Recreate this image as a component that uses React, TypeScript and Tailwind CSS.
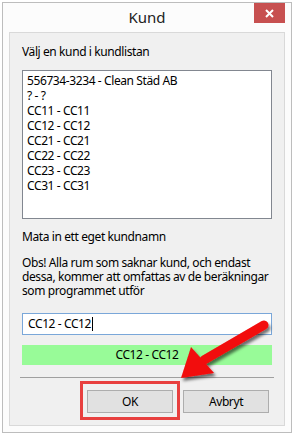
import React from 'react'

const customers = [
  '556734-3234 - Clean Städ AB',
  '? - ?',
  'CC11 - CC11',
  'CC12 - CC12',
  'CC21 - CC21',
  'CC22 - CC22',
  'CC23 - CC23',
  'CC31 - CC31',
]

function Arrow() {
  return (
    <svg
      className="pointer-events-none absolute left-0 top-0"
      width={294}
      height={435}
      viewBox="0 0 294 435"
    >
      <defs>
        <filter id="shadow" x="-20%" y="-20%" width="140%" height="140%">
          <feDropShadow dx="2" dy="3" stdDeviation="1.6" floodColor="#000" floodOpacity="0.55" />
        </filter>
      </defs>
      <g filter="url(#shadow)">
        <line x1="264" y1="325" x2="204" y2="360" stroke="#f20a0a" strokeWidth="9" strokeLinecap="round" />
        <polygon points="181,378 191,347 214,373" fill="#f20a0a" />
      </g>
    </svg>
  )
}

export default function App() {
  return (
    <div className="relative h-[435px] w-[294px] bg-white p-[2px] font-['Noto_Sans',sans-serif] text-[12px] tracking-[-0.4px] text-black">
      <div className="flex h-full flex-col border border-[#bdbdbd] bg-[#fcfcfc]">
        {/* title bar */}
        <div className="relative flex h-[29px] items-center justify-center">
          <span className="text-[15px] leading-none tracking-normal text-[#222]">Kund</span>
          <div className="absolute right-[6px] top-0 flex h-[20px] w-[31px] items-center justify-center bg-[#c75050]">
            <svg width="9" height="9" viewBox="0 0 9 9">
              <path d="M1 1L8 8M8 1L1 8" stroke="#fff" strokeWidth="2" />
            </svg>
          </div>
        </div>

        <div className="mx-[6px] mb-[6px] flex flex-1 flex-col border border-[#d9d9d9] bg-[#f0f0f0] px-[12px] pt-[11px]">
          <div className="leading-[15px]">Välj en kund i kundlistan</div>

          <div className="mt-[11px] h-[149px] border border-[#828790] bg-white px-[4px] pt-[2px]">
            {customers.map((c) => (
              <div key={c} className="leading-[15px]">
                {c}
              </div>
            ))}
          </div>

          <div className="mt-[10px] leading-[15px]">Mata in ett eget kundnamn</div>

          <div className="mt-[12px] leading-[14px]">
            Obs! Alla rum som saknar kund, och endast dessa, kommer att omfattas av de beräkningar som
            programmet utför
          </div>

          <div className="mt-[15px] flex h-[22px] items-center border border-[#7aa7d9] bg-white px-[5px]">
            <span>CC12 - CC12</span>
            <span className="ml-px h-[14px] w-px bg-black" />
          </div>

          <div className="mt-[10px] flex h-[20px] items-center justify-center bg-[#98fb98]">CC12 - CC12</div>

          <div className="-mx-[2px] mt-[12px] h-px bg-[#a0a0a0]" />

          <div className="mt-[12px] flex justify-end gap-[10px] pr-[3px]">
            <div className="relative">
              <div className="flex h-[23px] w-[86px] items-center justify-center border border-[#adadad] bg-[#e1e1e1]">
                OK
              </div>
              <div className="absolute -bottom-[7px] -left-[7px] -right-[7px] -top-[9px] border-[3px] border-[#e8403f]" />
            </div>
            <div className="flex h-[23px] w-[86px] items-center justify-center border border-[#adadad] bg-[#e1e1e1]">
              Avbryt
            </div>
          </div>
        </div>
      </div>
      <Arrow />
    </div>
  )
}
